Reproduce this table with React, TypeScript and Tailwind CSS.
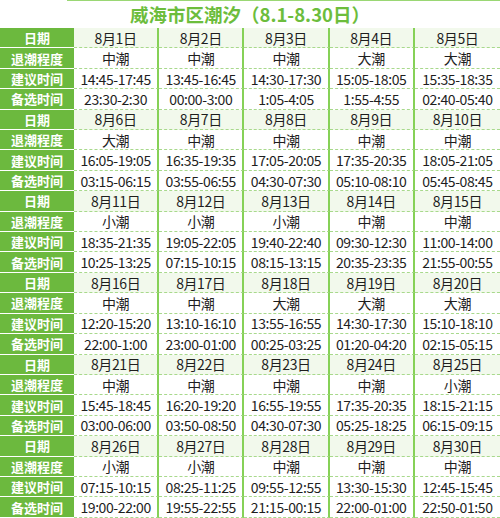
const labels = ['日期', '退潮程度', '建议时间', '备选时间'];

const groups: string[][][] = [
  [
    ['8月1日', '8月2日', '8月3日', '8月4日', '8月5日'],
    ['中潮', '中潮', '中潮', '大潮', '大潮'],
    ['14:45-17:45', '13:45-16:45', '14:30-17:30', '15:05-18:05', '15:35-18:35'],
    ['23:30-2:30', '00:00-3:00', '1:05-4:05', '1:55-4:55', '02:40-05:40'],
  ],
  [
    ['8月6日', '8月7日', '8月8日', '8月9日', '8月10日'],
    ['大潮', '中潮', '中潮', '中潮', '中潮'],
    ['16:05-19:05', '16:35-19:35', '17:05-20:05', '17:35-20:35', '18:05-21:05'],
    ['03:15-06:15', '03:55-06:55', '04:30-07:30', '05:10-08:10', '05:45-08:45'],
  ],
  [
    ['8月11日', '8月12日', '8月13日', '8月14日', '8月15日'],
    ['小潮', '小潮', '小潮', '中潮', '中潮'],
    ['18:35-21:35', '19:05-22:05', '19:40-22:40', '09:30-12:30', '11:00-14:00'],
    ['10:25-13:25', '07:15-10:15', '08:15-13:15', '20:35-23:35', '21:55-00:55'],
  ],
  [
    ['8月16日', '8月17日', '8月18日', '8月19日', '8月20日'],
    ['中潮', '中潮', '大潮', '大潮', '大潮'],
    ['12:20-15:20', '13:10-16:10', '13:55-16:55', '14:30-17:30', '15:10-18:10'],
    ['22:00-1:00', '23:00-01:00', '00:25-03:25', '01:20-04:20', '02:15-05:15'],
  ],
  [
    ['8月21日', '8月22日', '8月23日', '8月24日', '8月25日'],
    ['中潮', '中潮', '中潮', '中潮', '小潮'],
    ['15:45-18:45', '16:20-19:20', '16:55-19:55', '17:35-20:35', '18:15-21:15'],
    ['03:00-06:00', '03:50-08:50', '04:30-07:30', '05:25-18:25', '06:15-09:15'],
  ],
  [
    ['8月26日', '8月27日', '8月28日', '8月29日', '8月30日'],
    ['小潮', '小潮', '中潮', '中潮', '中潮'],
    ['07:15-10:15', '08:25-11:25', '09:55-12:55', '13:30-15:30', '12:45-15:45'],
    ['19:00-22:00', '19:55-22:55', '21:15-00:15', '22:00-01:00', '22:50-01:50'],
  ],
];

export default function App() {
  return (
    <div
      className="w-[500px] h-[518px] overflow-hidden bg-white"
      style={{ fontFamily: '"Noto Sans CJK SC", "Noto Sans", sans-serif' }}
    >
      <div className="h-px ml-[67px] bg-[#9ad774]" />
      <div className="h-[27px] flex items-center justify-center text-[18.5px] font-bold leading-none text-[#6cbd3c]">
        威海市区潮汐（8.1-8.30日）
      </div>
      <div className="grid grid-cols-[74px_repeat(5,1fr)] auto-rows-[20.42px]">
        {groups.map((group, gi) =>
          group.map((row, ri) => (
            <div key={`${gi}-${ri}`} className="contents">
              <div className="flex items-center justify-center bg-[#6cb93e] text-white font-bold text-[13px] leading-none border-b border-white">
                {labels[ri]}
              </div>
              {row.map((cell, ci) => (
                <div
                  key={ci}
                  className={`flex items-center justify-center text-[14px] tracking-[-0.4px] leading-none text-[#1e1e1e] border-b border-[#a8d98c] [border-bottom-style:dashed] ${
                    ci < 4 ? 'border-r-2 border-r-[#86d157] [border-right-style:solid]' : ''
                  } ${ri === 0 ? 'bg-[#f2f9ec]' : 'bg-white'}`}
                >
                  {cell}
                </div>
              ))}
            </div>
          ))
        )}
      </div>
    </div>
  );
}
